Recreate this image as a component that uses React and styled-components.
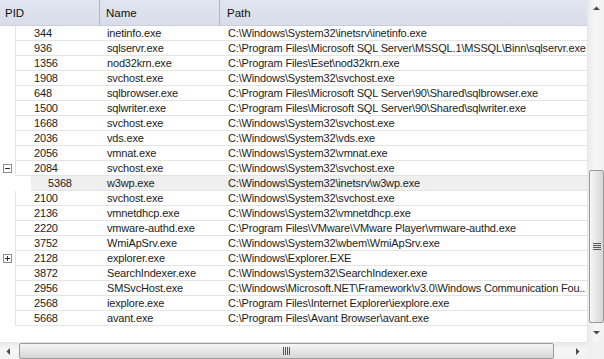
import React from 'react';
import styled, { createGlobalStyle } from 'styled-components';

const Global = createGlobalStyle`
  html, body { margin: 0; padding: 0; background: #fff; }
  body { font-family: "Liberation Sans", Arial, sans-serif; }
`;

const rows = [
  { pid: 344, name: 'inetinfo.exe', path: 'C:\\Windows\\System32\\inetsrv\\inetinfo.exe' },
  { pid: 936, name: 'sqlservr.exe', path: 'C:\\Program Files\\Microsoft SQL Server\\MSSQL.1\\MSSQL\\Binn\\sqlservr.exe' },
  { pid: 1356, name: 'nod32krn.exe', path: 'C:\\Program Files\\Eset\\nod32krn.exe' },
  { pid: 1908, name: 'svchost.exe', path: 'C:\\Windows\\System32\\svchost.exe' },
  { pid: 648, name: 'sqlbrowser.exe', path: 'C:\\Program Files\\Microsoft SQL Server\\90\\Shared\\sqlbrowser.exe' },
  { pid: 1500, name: 'sqlwriter.exe', path: 'C:\\Program Files\\Microsoft SQL Server\\90\\Shared\\sqlwriter.exe' },
  { pid: 1668, name: 'svchost.exe', path: 'C:\\Windows\\System32\\svchost.exe' },
  { pid: 2036, name: 'vds.exe', path: 'C:\\Windows\\System32\\vds.exe' },
  { pid: 2056, name: 'vmnat.exe', path: 'C:\\Windows\\System32\\vmnat.exe' },
  { pid: 2084, name: 'svchost.exe', path: 'C:\\Windows\\System32\\svchost.exe', expand: 'minus' },
  { pid: 5368, name: 'w3wp.exe', path: 'C:\\Windows\\System32\\inetsrv\\w3wp.exe', child: true },
  { pid: 2100, name: 'svchost.exe', path: 'C:\\Windows\\System32\\svchost.exe' },
  { pid: 2136, name: 'vmnetdhcp.exe', path: 'C:\\Windows\\System32\\vmnetdhcp.exe' },
  { pid: 2220, name: 'vmware-authd.exe', path: 'C:\\Program Files\\VMware\\VMware Player\\vmware-authd.exe' },
  { pid: 3752, name: 'WmiApSrv.exe', path: 'C:\\Windows\\System32\\wbem\\WmiApSrv.exe' },
  { pid: 2128, name: 'explorer.exe', path: 'C:\\Windows\\Explorer.EXE', expand: 'plus' },
  { pid: 3872, name: 'SearchIndexer.exe', path: 'C:\\Windows\\System32\\SearchIndexer.exe' },
  { pid: 2956, name: 'SMSvcHost.exe', path: 'C:\\Windows\\Microsoft.NET\\Framework\\v3.0\\Windows Communication Fou..' },
  { pid: 2568, name: 'iexplore.exe', path: 'C:\\Program Files\\Internet Explorer\\iexplore.exe' },
  { pid: 5668, name: 'avant.exe', path: 'C:\\Program Files\\Avant Browser\\avant.exe' },
];

const Frame = styled.div`
  width: 604px;
  height: 359px;
  display: grid;
  grid-template-columns: 1fr 17px;
  grid-template-rows: 1fr 17px;
  overflow: hidden;
  font-size: 11px;
  letter-spacing: -0.17px;
  color: #1c1c1c;
`;

const Main = styled.div`
  display: flex;
  flex-direction: column;
  overflow: hidden;
  min-width: 0;
`;

const Header = styled.div`
  height: 25px;
  flex: none;
  display: grid;
  grid-template-columns: 100px 120px 1fr;
  background: linear-gradient(#e1e5ef, #d8dde9);
  border-bottom: 1px solid #c9cfdc;
`;

const HeadCell = styled.div`
  display: flex;
  align-items: center;
  padding-left: ${p => p.$pad}px;
  border-right: ${p => (p.$last ? 'none' : '1px solid #aeb6c8')};
  color: #111;
  font-size: 11.5px;
  letter-spacing: 0;
`;

const Body = styled.div`
  flex: 1;
  display: flex;
  flex-direction: column;
`;

const Row = styled.div`
  height: 15px;
  display: flex;
  flex: none;
`;

const Gutter = styled.div`
  width: ${p => (p.$child ? 31 : 16)}px;
  flex: none;
  display: flex;
  align-items: center;
  padding-left: 3px;
  box-sizing: border-box;
  border-right: ${p => (p.$child ? 'none' : '1px solid #e4e4e4')};
`;

const ExpandBox = styled.div`
  width: 9px;
  height: 9px;
  box-sizing: border-box;
  border: 1px solid #8e8e8e;
  background: #fff;
  position: relative;
  &::before {
    content: '';
    position: absolute;
    left: 1px;
    top: 3px;
    width: 5px;
    height: 1px;
    background: #333;
  }
  &::after {
    content: '';
    position: absolute;
    left: 3px;
    top: 1px;
    width: 1px;
    height: 5px;
    background: #333;
    display: ${p => (p.$plus ? 'block' : 'none')};
  }
`;

const Cells = styled.div`
  flex: 1;
  display: grid;
  grid-template-columns: ${p => (p.$child ? 69 : 84)}px 120px 1fr;
  border-bottom: 1px solid #e4e4e4;
  background: ${p => (p.$hl ? '#efefef' : 'transparent')};
  box-sizing: border-box;
  min-width: 0;
`;

const Cell = styled.div`
  padding-left: ${p => p.$pad}px;
  line-height: 14px;
  white-space: nowrap;
  overflow: hidden;
`;

const VScroll = styled.div`
  display: flex;
  flex-direction: column;
  background: linear-gradient(90deg, #ebebeb, #f6f6f6 40%, #f1f1f1);
  border-left: 1px solid #e6e6e6;
`;

const HScroll = styled.div`
  display: flex;
  background: linear-gradient(#ebebeb, #f6f6f6 40%, #f1f1f1);
  border-top: 1px solid #e6e6e6;
`;

const Corner = styled.div`
  background: #f0f0f0;
`;

const ArrowBtn = styled.div`
  width: ${p => (p.$h ? 17 : 16)}px;
  height: ${p => (p.$h ? 16 : 17)}px;
  flex: none;
  display: flex;
  align-items: center;
  justify-content: center;
`;

const VTrack = styled.div`
  flex: 1;
  display: flex;
  flex-direction: column;
  justify-content: flex-end;
  padding: 0 1px 2px 1px;
`;

const HTrack = styled.div`
  flex: 1;
  display: flex;
  padding: 0 0 0 2px;
`;

const Thumb = styled.div`
  box-sizing: border-box;
  border: 1px solid #9b9b9b;
  border-radius: 2px;
  display: flex;
  align-items: center;
  justify-content: center;
  ${p =>
    p.$h
      ? `width: 535px; height: 16px; background: linear-gradient(#f6f6f6, #e6e6e6 50%, #d6d6d6);`
      : `height: 153px; width: 15px; background: linear-gradient(90deg, #f6f6f6, #e6e6e6 50%, #d6d6d6);`}
`;

const Arrow = ({ dir }) => {
  const pts = {
    up: '0,4 3.5,0.5 7,4',
    down: '0,0 7,0 3.5,3.5',
    left: '4,0 4,7 0.5,3.5',
    right: '0,0 0,7 3.5,3.5',
  }[dir];
  const h = dir === 'left' || dir === 'right';
  return (
    <svg width={h ? 5 : 7} height={h ? 7 : 5} viewBox={h ? '0 0 5 7' : '0 0 7 5'}>
      <polygon points={pts} fill="#4a4a4a" />
    </svg>
  );
};

const Grip = ({ h }) => (
  <svg width="8" height="8" viewBox="0 0 8 8">
    {[0, 2, 4, 6].map(i =>
      h ? (
        <line key={i} x1={i + 0.5} y1="0" x2={i + 0.5} y2="8" stroke="#555" strokeWidth="1" />
      ) : (
        <line key={i} x1="0" y1={i + 0.5} x2="8" y2={i + 0.5} stroke="#555" strokeWidth="1" />
      )
    )}
  </svg>
);

export default function App() {
  return (
    <>
      <Global />
      <Frame>
        <Main>
          <Header>
            <HeadCell $pad={5}>PID</HeadCell>
            <HeadCell $pad={6}>Name</HeadCell>
            <HeadCell $pad={7} $last>Path</HeadCell>
          </Header>
          <Body>
            {rows.map(r => (
              <Row key={r.pid}>
                <Gutter $child={r.child}>
                  {r.expand && <ExpandBox $plus={r.expand === 'plus'} />}
                </Gutter>
                <Cells $child={r.child} $hl={r.child}>
                  <Cell $pad={r.child ? 17 : 18}>{r.pid}</Cell>
                  <Cell $pad={7}>{r.name}</Cell>
                  <Cell $pad={8}>{r.path}</Cell>
                </Cells>
              </Row>
            ))}
          </Body>
        </Main>
        <VScroll>
          <ArrowBtn><Arrow dir="up" /></ArrowBtn>
          <VTrack>
            <Thumb><Grip /></Thumb>
          </VTrack>
          <ArrowBtn><Arrow dir="down" /></ArrowBtn>
        </VScroll>
        <HScroll>
          <ArrowBtn $h><Arrow dir="left" /></ArrowBtn>
          <HTrack>
            <Thumb $h><Grip h /></Thumb>
          </HTrack>
          <ArrowBtn $h><Arrow dir="right" /></ArrowBtn>
        </HScroll>
        <Corner />
      </Frame>
    </>
  );
}
